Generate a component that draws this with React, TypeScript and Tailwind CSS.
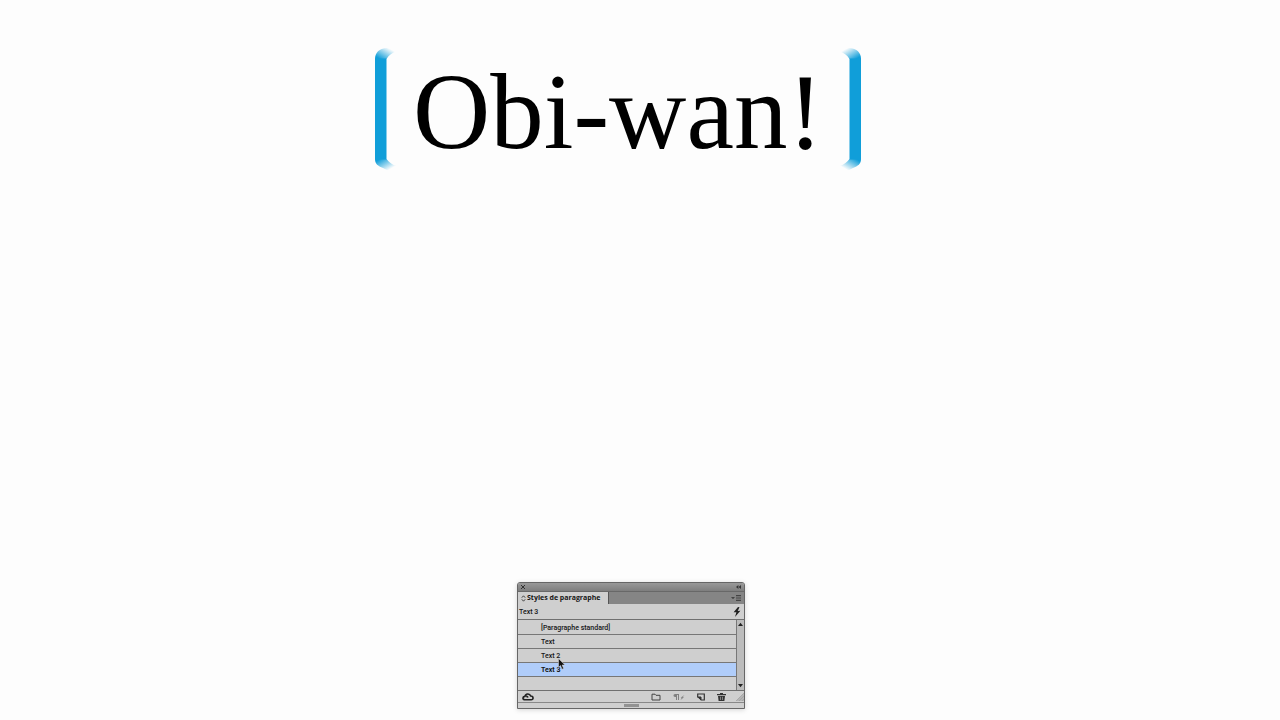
import React, { useState } from "react";

const styles = [
  { id: "standard", label: "[Paragraphe standard]" },
  { id: "text", label: "Text" },
  { id: "text-2", label: "Text 2" },
  { id: "text-3", label: "Text 3" },
];

function Bracket({ side }: { side: "left" | "right" }) {
  const id = `fade-${side}`;
  return (
    <svg
      viewBox="0 0 22 124"
      className={side === "right" ? "h-[124px] w-[22px] -scale-x-100" : "h-[124px] w-[22px]"}
      aria-hidden="true"
    >
      <defs>
        <linearGradient id={`${id}-top`} gradientUnits="userSpaceOnUse" x1="5" y1="12" x2="12" y2="0">
          <stop offset="0" stopColor="#109ed9" />
          <stop offset="1" stopColor="#109ed9" stopOpacity="0" />
        </linearGradient>
        <linearGradient id={`${id}-bottom`} gradientUnits="userSpaceOnUse" x1="5" y1="112" x2="12" y2="124">
          <stop offset="0" stopColor="#109ed9" />
          <stop offset="1" stopColor="#109ed9" stopOpacity="0" />
        </linearGradient>
      </defs>
      <path d="M0 12C0 6 4 1 12 1L22 4C17 6 14 8 11.5 12Z" fill={`url(#${id}-top)`} />
      <path d="M0 11.5H11.5V112.5H0Z" fill="#109ed9" />
      <path d="M0 112C0 117 3 119 8 121L14 124L22 119C17 118 14 115 11.5 112Z" fill={`url(#${id}-bottom)`} />
    </svg>
  );
}

function StylesPanel() {
  const [selected, setSelected] = useState("text-3");
  const current = styles.find((style) => style.id === selected);

  return (
    <section className="flex w-[228px] flex-col overflow-hidden rounded-t-[3px] border border-[#666] bg-[#cfcfcf] text-[7px] leading-[10px] font-medium text-[#161616] shadow-[0_1px_5px_rgba(0,0,0,0.16)]">
      <div className="flex h-[9px] items-center justify-between border-b border-[#686868] bg-linear-to-b from-[#999] to-[#7e7e7e] px-[3px]">
        <button aria-label="Fermer" className="flex">
          <svg viewBox="0 0 4 4" className="size-1" stroke="#333">
            <path d="M0 0L4 4M4 0L0 4" />
          </svg>
        </button>
        <button aria-label="Réduire" className="flex">
          <svg viewBox="0 0 5 4" className="h-1 w-[5px]" fill="#333">
            <path d="M2.4 0V4L0 2ZM5 0V4L2.6 2Z" />
          </svg>
        </button>
      </div>

      <div className="flex h-3 justify-between bg-[#858585]">
        <h2 className="flex items-center gap-px border-r border-[#555] bg-[#cfcfcf] pr-2 pl-[3px] font-['Open_Sans',sans-serif] text-[7px] font-bold">
          <svg viewBox="0 0 5 7" className="h-[7px] w-[5px]" fill="none" stroke="#333">
            <path d="M.8 2.7L2.5 .8L4.2 2.7M.8 4.3L2.5 6.2L4.2 4.3" strokeWidth=".9" />
          </svg>
          Styles de paragraphe
        </h2>
        <button aria-label="Menu du panneau" className="flex items-center pr-[3px]">
          <svg viewBox="0 0 10 6" className="h-[6px] w-[10px]" fill="#444">
            <path d="M0 2H4L2 4.2ZM5 0H10V1H5ZM5 1.7H10V2.6H5ZM5 3.4H10V4.3H5ZM5 5H10V6H5Z" />
          </svg>
        </button>
      </div>

      <div className="flex h-4 items-center justify-between border-b border-[#707070] pr-[3px] pl-px">
        <span>{current?.label}</span>
        <button aria-label="Effacer les remplacements" className="flex">
          <svg viewBox="0 0 8 10" className="h-[10px] w-2" fill="#222">
            <path d="M5 0L.6 5.3L3.4 5.2L2 10L7.4 3.8L4.7 4L6.5 .3Z" />
          </svg>
        </button>
      </div>

      <div className="flex h-[71px] border-b border-[#707070]">
        <ul className="flex-1 pt-px">
          {styles.map((style) => (
            <li key={style.id} className="h-[14px] border-b border-[#777]">
              <button
                onClick={() => setSelected(style.id)}
                className={
                  style.id === selected
                    ? "block h-[13px] w-full bg-[#b0cdfa] pt-px pl-[23px] text-left font-bold"
                    : "block h-[13px] w-full pt-px pl-[23px] text-left"
                }
              >
                {style.label}
              </button>
            </li>
          ))}
        </ul>
        <div className="flex w-2 flex-col items-center justify-between border-l border-[#777] bg-[#bcbcbc] py-[2px]">
          <button aria-label="Monter" className="flex">
            <svg viewBox="0 0 5 5" className="size-[5px]" fill="#222">
              <path d="M0 4H5L2.5 .8Z" />
            </svg>
          </button>
          <button aria-label="Descendre" className="flex">
            <svg viewBox="0 0 5 5" className="size-[5px]" fill="#222">
              <path d="M0 1H5L2.5 4.2Z" />
            </svg>
          </button>
        </div>
      </div>

      <div className="flex h-3 items-center border-b border-[#888] pl-1">
        <button aria-label="Bibliothèque" className="mr-auto flex">
          <svg viewBox="0 0 12 8" className="h-2 w-3" fill="none" stroke="#222" strokeWidth="1.6">
            <path d="M3.2 6.8C.3 6.8.2 3.8 3 3.4C3.4.4 7.7 0 8.7 3C11.8 3.2 11.7 6.8 9.2 6.8ZM4.1 3.4C5 3.2 5.7 3.7 6 4.5" />
          </svg>
        </button>
        <div className="flex items-center gap-3">
          <button aria-label="Nouveau groupe" className="flex">
            <svg viewBox="0 0 10 8" className="h-2 w-[10px]" fill="none" stroke="#444">
              <path d="M1 7V1.2H4L5 2.3H9V7Z" />
            </svg>
          </button>
          <button aria-label="Effacer" className="flex">
            <svg viewBox="0 0 12 8" className="h-2 w-3" fill="#808080">
              <path d="M2 1H6V7H5V2H4V7H3V4H2C0 4 0 1 2 1ZM11.5 2L9.6 4.2H11L7.5 7L8.7 4.8H7.5Z" />
            </svg>
          </button>
          <button aria-label="Nouveau style" className="flex">
            <svg viewBox="0 0 8 8" className="size-2" fill="none" stroke="#333">
              <path d="M.7 4.5V1H7.3V7H3.7" strokeWidth="1.2" />
              <path d="M.8 4H4V7Z" fill="#333" />
            </svg>
          </button>
          <button aria-label="Supprimer" className="flex">
            <svg viewBox="0 0 9 8" className="h-2 w-[9px]" fill="#333">
              <path d="M3 0H6V1H9V2.3H0V1H3ZM1 3H8L7.4 8H1.6ZM3 3.8L3.2 7H3.7L3.5 3.8ZM5.5 3.8L5.3 7H5.8L6 3.8Z" fillRule="evenodd" />
            </svg>
          </button>
        </div>
        <svg viewBox="0 0 8 8" className="ml-[10px] size-2">
          <path d="M0 8L8 0V8Z" fill="#b4b4b4" />
          <path d="M0 8L8 0M3 8L8 3M6 8L8 6" stroke="#999" strokeWidth=".6" />
        </svg>
      </div>
      <div className="flex h-[5px] items-center justify-center">
        <span className="h-[3px] w-[15px] bg-[#929292]" />
      </div>
    </section>
  );
}

export default function App() {
  return (
    <main className="flex min-h-screen flex-col items-center justify-between bg-[#fdfdfd] pt-[47px] pb-[11px] font-['Roboto',sans-serif]">
      <div className="flex items-start gap-4 pr-11">
        <Bracket side="left" />
        <h1 className="font-['Liberation_Serif',serif] text-[107px] leading-[130px] text-black">
          Obi-wan!
        </h1>
        <Bracket side="right" />
      </div>

      <div className="relative mr-[18px]">
        <StylesPanel />
        <svg
          viewBox="0 0 8 12"
          className="pointer-events-none absolute top-[76px] left-[41px] h-3 w-2"
          fill="#111"
          stroke="#ddd"
          strokeWidth=".5"
        >
          <path d="M.5 .5V9.4L2.5 7.5L4 11.2L5.6 10.5L4.1 7H6.9Z" />
        </svg>
      </div>
    </main>
  );
}
